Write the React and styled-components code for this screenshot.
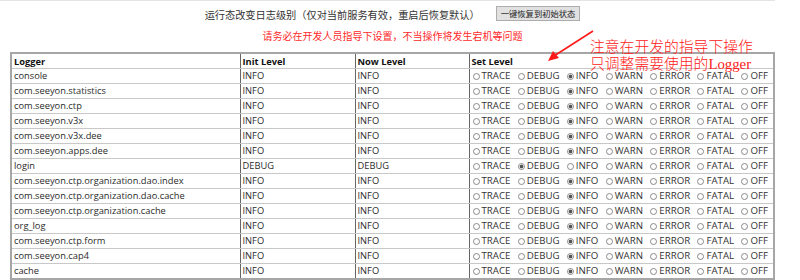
import React from "react"
import styled, { createGlobalStyle } from "styled-components"

const LEVELS = ["TRACE", "DEBUG", "INFO", "WARN", "ERROR", "FATAL", "OFF"]

const LOGGERS = [
  ["console", "INFO"],
  ["com.seeyon.statistics", "INFO"],
  ["com.seeyon.ctp", "INFO"],
  ["com.seeyon.v3x", "INFO"],
  ["com.seeyon.v3x.dee", "INFO"],
  ["com.seeyon.apps.dee", "INFO"],
  ["login", "DEBUG"],
  ["com.seeyon.ctp.organization.dao.index", "INFO"],
  ["com.seeyon.ctp.organization.dao.cache", "INFO"],
  ["com.seeyon.ctp.organization.cache", "INFO"],
  ["org_log", "INFO"],
  ["com.seeyon.ctp.form", "INFO"],
  ["com.seeyon.cap4", "INFO"],
  ["cache", "INFO"],
]

const GlobalStyle = createGlobalStyle`
  html, body {
    margin: 0;
    padding: 0;
    background: #fff;
    overflow: hidden;
  }
  body {
    font-family: "Open Sans", "Noto Sans CJK SC", sans-serif;
    color: #222;
  }
`

const Page = styled.div`
  position: relative;
  width: 765px;
  padding: 4px 0 0 10px;
  border-top: 1px solid #e4e4e4;
`

const TopBar = styled.div`
  display: flex;
  justify-content: center;
  align-items: center;
  gap: 16px;
  height: 16px;
  font-size: 10.2px;
  color: #333;
`

const TopText = styled.span`
  padding-top: 3px;
`

const ResetButton = styled.button`
  font-family: "Noto Sans CJK SC", sans-serif;
  font-size: 8.3px;
  line-height: 12px;
  height: 15px;
  padding: 0 4px;
  color: #222;
  background: #e1e1e1;
  border: 1px solid #adadad;
  border-radius: 0;
`

const Warning = styled.div`
  margin-top: 9px;
  text-align: center;
  font-size: 10px;
  line-height: 12px;
  color: #ff2a2a;
`

const Table = styled.table`
  margin-top: 10px;
  width: 765px;
  table-layout: fixed;
  border-collapse: collapse;
  border: 2px solid #a6a6a6;
  font-size: 9.3px;
`

const Th = styled.th`
  height: 14px;
  padding: 0 2px;
  text-align: left;
  font-weight: bold;
  color: #111;
  border-left: 1px solid #666;
  border-bottom: 1px solid #c8c8c8;
`

const Td = styled.td`
  height: 14px;
  padding: 0 2px;
  line-height: 14px;
  white-space: nowrap;
  overflow: hidden;
  color: #2a2a2a;
  border-left: 1px solid #666;
  border-bottom: 1px solid #c8c8c8;
`

const Levels = styled.div`
  display: flex;
  align-items: center;
  justify-content: space-between;
  padding: 0 3px 0 1px;
  font-size: 9.7px;
`

const Option = styled.label`
  display: flex;
  align-items: center;
  gap: 2px;
  color: #333;
`

const Radio = styled.input.attrs({ type: "radio" })`
  appearance: none;
  margin: 0;
  width: 7px;
  height: 7px;
  border: 1px solid #8a8a8a;
  border-radius: 50%;
  background: #fff;
  &:checked {
    background: radial-gradient(circle, #555 0 1.6px, #fff 2.2px);
  }
`

const Note = styled.div`
  position: absolute;
  left: 590px;
  top: 38px;
  font-family: "Liberation Serif", "Noto Sans CJK SC", serif;
  font-weight: 300;
  font-size: 14.8px;
  line-height: 17px;
  color: #ff2020;
  pointer-events: none;
`

const Arrow = styled.svg`
  position: absolute;
  left: 540px;
  top: 25px;
`

const LevelPicker = ({ name, value }) => (
  <Levels>
    {LEVELS.map(lv => (
      <Option key={lv}>
        <Radio name={name} defaultChecked={lv === value} />
        {lv}
      </Option>
    ))}
  </Levels>
)

const App = () => {
  return (
    <Page>
      <GlobalStyle />
      <TopBar>
        <TopText>运行态改变日志级别（仅对当前服务有效，重启后恢复默认）</TopText>
        <ResetButton>一键恢复到初始状态</ResetButton>
      </TopBar>
      <Warning>请务必在开发人员指导下设置，不当操作将发生宕机等问题</Warning>
      <Table>
        <colgroup>
          <col style={{ width: 229 }} />
          <col style={{ width: 115 }} />
          <col style={{ width: 114 }} />
          <col />
        </colgroup>
        <thead>
          <tr>
            <Th>Logger</Th>
            <Th>Init Level</Th>
            <Th>Now Level</Th>
            <Th>Set Level</Th>
          </tr>
        </thead>
        <tbody>
          {LOGGERS.map(([name, level]) => (
            <tr key={name}>
              <Td>{name}</Td>
              <Td>{level}</Td>
              <Td>{level}</Td>
              <Td><LevelPicker name={name} value={level} /></Td>
            </tr>
          ))}
        </tbody>
      </Table>
      <Arrow width="60" height="40" viewBox="0 0 60 40">
        <line x1="53" y1="5" x2="14" y2="30" stroke="#ff1a1a" strokeWidth="1.6" />
        <polygon points="8,35 13,25 19,32" fill="#ff1a1a" />
      </Arrow>
      <Note>
        注意在开发的指导下操作<br />
        只调整需要使用的Logger
      </Note>
    </Page>
  )
}

export default App
